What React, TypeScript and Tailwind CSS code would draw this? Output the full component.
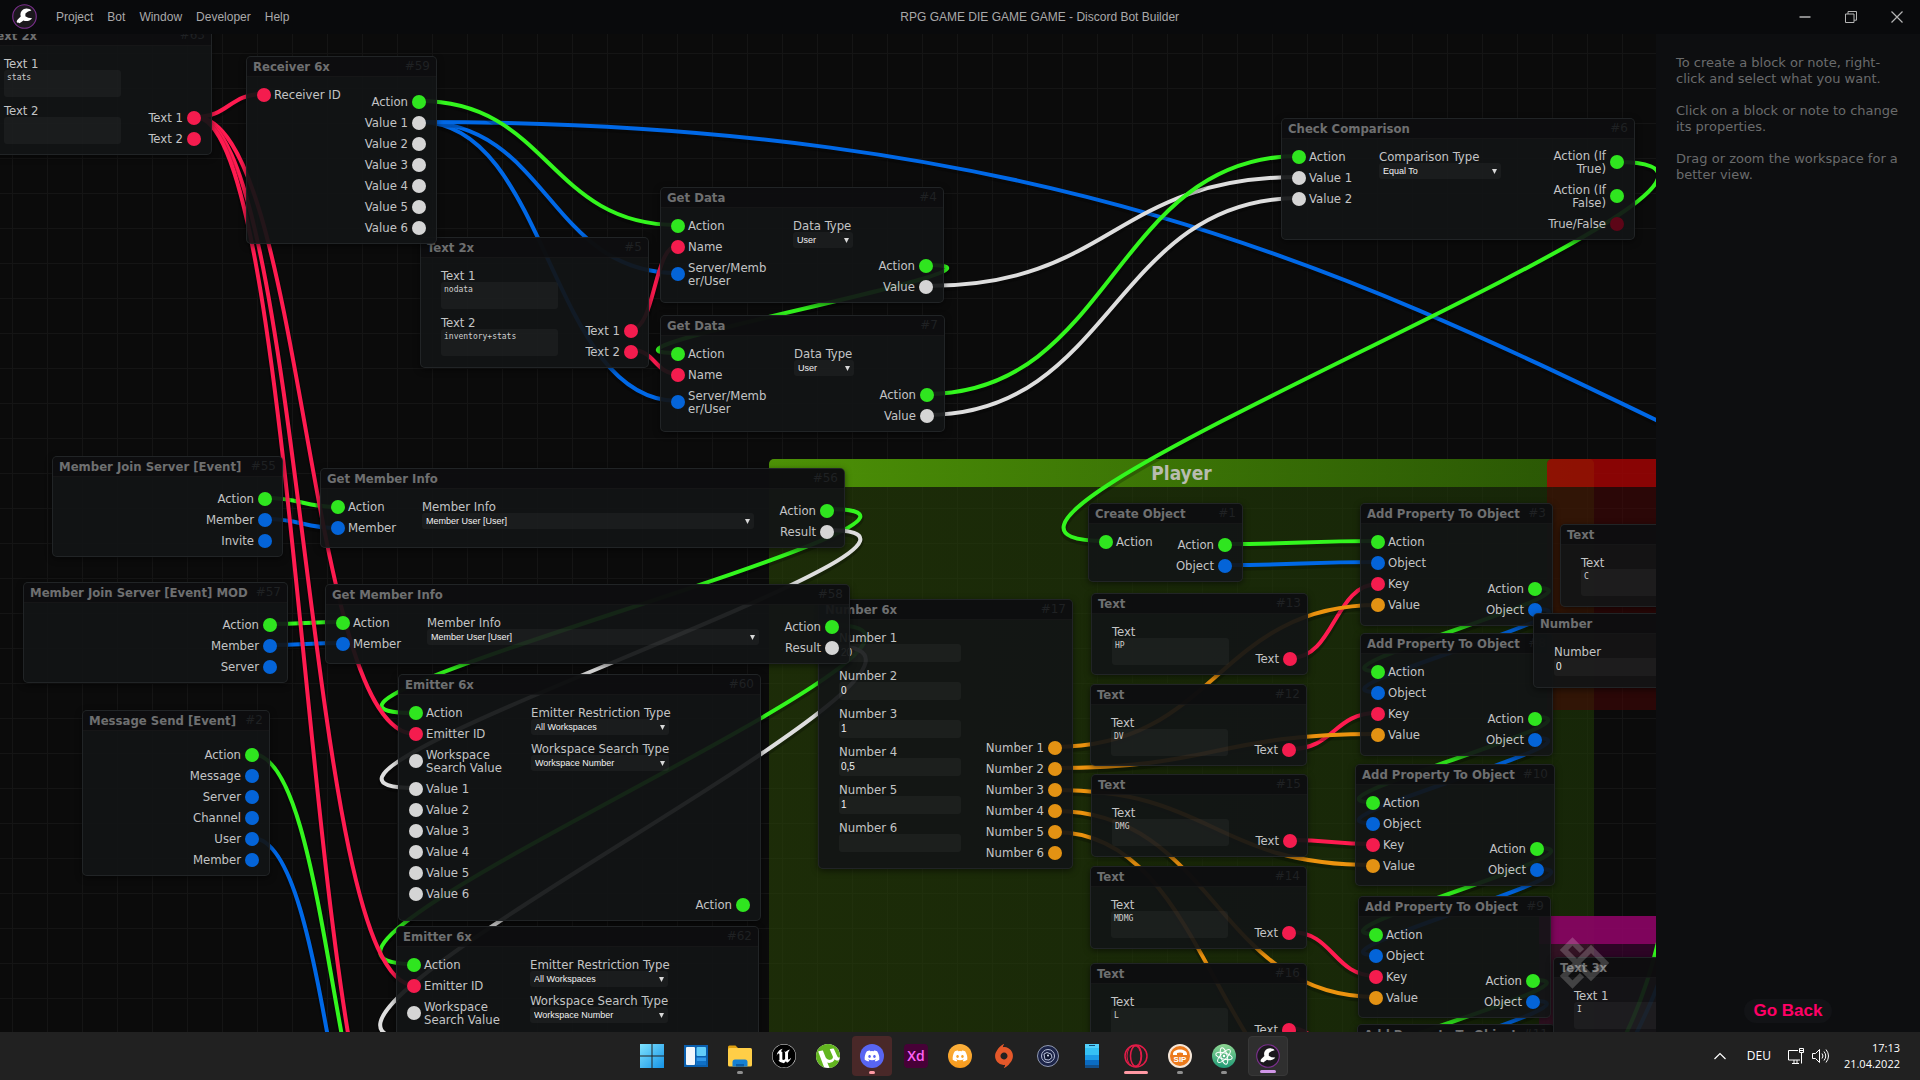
import React from "react";
import { FaDiscord } from "react-icons/fa";
import { SiUnrealengine, SiUtorrent, SiOrigin } from "react-icons/si";

type Tone = "green" | "white" | "blue" | "red" | "orange" | "maroon";
type Port = [Tone, string];
type Field = { kind: "select" | "text" | "number"; label: string; value: string; w: number };
type NodeData = {
  id: string;
  title: string;
  x: number;
  y: number;
  w: number;
  h: number;
  inputs?: Port[];
  outputs?: Port[];
  fields?: Field[];
  fieldX?: number;
};

const TITLE_BAR = 34;

const portTone: Record<Tone, string> = {
  green: "bg-[#2fe51f]",
  white: "bg-[#d5d5d5]",
  blue: "bg-[#0464d8]",
  red: "bg-[#f41c4e]",
  orange: "bg-[#e39213]",
  maroon: "bg-[#5c0517]",
};

const cableTone: Record<Tone, string> = {
  green: "#33f61e",
  white: "#dedede",
  blue: "#0068e6",
  red: "#ff1b50",
  orange: "#ec930f",
  maroon: "#5c0517",
};

const values = (n: number): Port[] =>
  Array.from({ length: n }, (_, i): Port => ["white", `Value ${i + 1}`]);

const propertyIn: Port[] = [["green", "Action"], ["blue", "Object"], ["red", "Key"], ["orange", "Value"]];
const propertyOut: Port[] = [["green", "Action"], ["blue", "Object"]];
const emitterIn: Port[] = [["green", "Action"], ["red", "Emitter ID"], ["white", "Workspace\nSearch Value"], ...values(6)];
const emitterFields: Field[] = [
  { kind: "select", label: "Emitter Restriction Type", value: "All Workspaces", w: 138 },
  { kind: "select", label: "Workspace Search Type", value: "Workspace Number", w: 138 },
];
const dataIn: Port[] = [["green", "Action"], ["red", "Name"], ["blue", "Server/Memb\ner/User"]];
const dataOut: Port[] = [["green", "Action"], ["white", "Value"]];
const memberFields: Field[] = [{ kind: "select", label: "Member Info", value: "Member User [User]", w: 332 }];
const memberOut: Port[] = [["green", "Action"], ["white", "Result"]];
const textOut: Port[] = [["red", "Text"]];
const text = (label: string, value: string): Field => ({ kind: "text", label, value, w: 117 });
const num = (label: string, value: string): Field => ({ kind: "number", label, value, w: 122 });

const nodes: NodeData[] = [
  { id: "63", title: "Text 2x", x: -17, y: 25, w: 229, h: 130, fieldX: 20, fields: [text("Text 1", "stats"), text("Text 2", "")], outputs: [["red", "Text 1"], ["red", "Text 2"]] },
  { id: "5", title: "Text 2x", x: 420, y: 237, w: 229, h: 131, fieldX: 20, fields: [text("Text 1", "nodata"), text("Text 2", "inventory+stats")], outputs: [["red", "Text 1"], ["red", "Text 2"]] },
  { id: "59", title: "Receiver 6x", x: 246, y: 56, w: 191, h: 188, inputs: [["red", "Receiver ID"]], outputs: [["green", "Action"], ...values(6)] },
  { id: "4", title: "Get Data", x: 660, y: 187, w: 284, h: 116, fieldX: 132, inputs: dataIn, outputs: dataOut, fields: [{ kind: "select", label: "Data Type", value: "User", w: 60 }] },
  { id: "7", title: "Get Data", x: 660, y: 315, w: 285, h: 117, fieldX: 133, inputs: dataIn, outputs: dataOut, fields: [{ kind: "select", label: "Data Type", value: "User", w: 60 }] },
  { id: "6", title: "Check Comparison", x: 1281, y: 118, w: 354, h: 122, fieldX: 97, inputs: [["green", "Action"], ["white", "Value 1"], ["white", "Value 2"]], outputs: [["green", "Action (If\nTrue)"], ["green", "Action (If\nFalse)"], ["maroon", "True/False"]], fields: [{ kind: "select", label: "Comparison Type", value: "Equal To", w: 122 }] },
  { id: "17", title: "Number 6x", x: 818, y: 599, w: 255, h: 270, fieldX: 20, fields: [num("Number 1", "20"), num("Number 2", "0"), num("Number 3", "1"), num("Number 4", "0,5"), num("Number 5", "1"), num("Number 6", "")], outputs: [1, 2, 3, 4, 5, 6].map((n): Port => ["orange", `Number ${n}`]) },
  { id: "55", title: "Member Join Server [Event]", x: 52, y: 456, w: 231, h: 101, outputs: [["green", "Action"], ["blue", "Member"], ["blue", "Invite"]] },
  { id: "57", title: "Member Join Server [Event] MOD", x: 23, y: 582, w: 265, h: 101, outputs: [["green", "Action"], ["blue", "Member"], ["blue", "Server"]] },
  { id: "2", title: "Message Send [Event]", x: 82, y: 710, w: 188, h: 166, outputs: [["green", "Action"], ["blue", "Message"], ["blue", "Server"], ["blue", "Channel"], ["blue", "User"], ["blue", "Member"]] },
  { id: "56", title: "Get Member Info", x: 320, y: 468, w: 525, h: 80, fieldX: 101, inputs: [["green", "Action"], ["blue", "Member"]], outputs: memberOut, fields: memberFields },
  { id: "58", title: "Get Member Info", x: 325, y: 584, w: 525, h: 80, fieldX: 101, inputs: [["green", "Action"], ["blue", "Member"]], outputs: memberOut, fields: memberFields },
  { id: "60", title: "Emitter 6x", x: 398, y: 674, w: 363, h: 247, fieldX: 132, inputs: emitterIn, outputs: [["green", "Action"]], fields: emitterFields },
  { id: "62", title: "Emitter 6x", x: 396, y: 926, w: 363, h: 247, fieldX: 133, inputs: emitterIn, outputs: [["green", "Action"]], fields: emitterFields },
  { id: "1", title: "Create Object", x: 1088, y: 503, w: 155, h: 79, inputs: [["green", "Action"]], outputs: propertyOut },
  { id: "13", title: "Text", x: 1091, y: 593, w: 217, h: 82, fieldX: 20, fields: [text("Text", "HP")], outputs: textOut },
  { id: "12", title: "Text", x: 1090, y: 684, w: 217, h: 82, fieldX: 20, fields: [text("Text", "DV")], outputs: textOut },
  { id: "15", title: "Text", x: 1091, y: 774, w: 217, h: 83, fieldX: 20, fields: [text("Text", "DMG")], outputs: textOut },
  { id: "14", title: "Text", x: 1090, y: 866, w: 217, h: 83, fieldX: 20, fields: [text("Text", "MDMG")], outputs: textOut },
  { id: "16", title: "Text", x: 1090, y: 963, w: 217, h: 83, fieldX: 20, fields: [text("Text", "L")], outputs: textOut },
  { id: "3", title: "Add Property To Object", x: 1360, y: 503, w: 193, h: 123, inputs: propertyIn, outputs: propertyOut },
  { id: "8", title: "Add Property To Object", x: 1360, y: 633, w: 193, h: 123, inputs: propertyIn, outputs: propertyOut },
  { id: "10", title: "Add Property To Object", x: 1355, y: 764, w: 200, h: 122, inputs: propertyIn, outputs: propertyOut },
  { id: "9", title: "Add Property To Object", x: 1358, y: 896, w: 193, h: 122, inputs: propertyIn, outputs: propertyOut },
  { id: "11", title: "Add Property To Object", x: 1357, y: 1024, w: 198, h: 122, inputs: propertyIn, outputs: propertyOut },
  { id: "18", title: "Text", x: 1560, y: 524, w: 217, h: 83, fieldX: 20, fields: [text("Text", "C")], outputs: textOut },
  { id: "19", title: "Number", x: 1533, y: 613, w: 217, h: 75, fieldX: 20, fields: [num("Number", "0")] },
  { id: "20", title: "Text 3x", x: 1553, y: 957, w: 229, h: 177, fieldX: 20, fields: [text("Text 1", "I"), text("Text 2", "")] },
];

const cables: [Tone, number, number, number, number][] = [
  ["blue", 420, 122, 677, 273],
  ["blue", 420, 122, 678, 401],
  ["blue", 420, 122, 2892, 718],
  ["green", 420, 101, 677, 225],
  ["green", 927, 265, 678, 353],
  ["white", 927, 286, 1299, 177],
  ["white", 927, 415, 1299, 198],
  ["green", 927, 394, 1299, 156],
  ["green", 1617, 162, 1105, 541],
  ["red", 632, 329, 677, 246],
  ["red", 632, 350, 678, 374],
  ["green", 266, 498, 338, 507],
  ["blue", 266, 519, 338, 528],
  ["green", 270, 624, 342, 622],
  ["blue", 270, 645, 342, 643],
  ["green", 827, 509, 415, 713],
  ["white", 827, 530, 415, 788],
  ["green", 832, 625, 414, 964],
  ["white", 832, 646, 414, 1039],
  ["green", 252, 754, 414, 1217],
  ["blue", 252, 838, 414, 1292],
  ["red", 195, 117, 263, 94],
  ["red", 195, 117, 415, 734],
  ["red", 195, 117, 414, 985],
  ["red", 195, 117, 414, 1210],
  ["green", 1226, 544, 1378, 541],
  ["blue", 1226, 565, 1378, 562],
  ["green", 1536, 588, 1377, 671],
  ["blue", 1536, 609, 1377, 692],
  ["green", 1535, 717, 1372, 802],
  ["blue", 1535, 738, 1372, 823],
  ["green", 1538, 848, 1376, 934],
  ["blue", 1538, 869, 1376, 955],
  ["green", 1534, 980, 1375, 1062],
  ["blue", 1534, 1001, 1375, 1083],
  ["red", 1291, 658, 1378, 584],
  ["red", 1291, 749, 1377, 713],
  ["red", 1291, 840, 1372, 844],
  ["red", 1291, 932, 1376, 976],
  ["red", 1290, 1028, 1375, 1104],
  ["orange", 1055, 747, 1378, 605],
  ["orange", 1055, 768, 1377, 734],
  ["orange", 1055, 790, 1372, 865],
  ["orange", 1055, 811, 1376, 997],
  ["orange", 1055, 832, 1375, 1126],
];

function cablePath(x1: number, y1: number, x2: number, y2: number) {
  const bend = Math.abs(x2 - x1) / 2;
  return `M${x1} ${y1}C${x1 + bend} ${y1} ${x2 - bend} ${y2} ${x2} ${y2}`;
}

function Cables() {
  return (
    <svg className="absolute inset-0 h-full w-full" fill="none" aria-hidden="true">
      <g transform={`translate(0 ${-TITLE_BAR})`} strokeWidth="4">
        {cables.map(([tone, x1, y1, x2, y2], i) => (
          <g key={i}>
            <path d={cablePath(x1, y1 + 2, x2, y2 + 2)} stroke="#000" strokeOpacity=".22" strokeWidth="7" />
            <path d={cablePath(x1, y1, x2, y2)} stroke={cableTone[tone]} />
          </g>
        ))}
        <path d="M1662 925C1652 970 1642 1000 1626 1034" stroke="#33f61e" />
        <path d="M1668 950C1660 985 1650 1005 1636 1034" stroke="#0068e6" />
      </g>
    </svg>
  );
}

function PortRow({ port, side }: { port: Port; side: "in" | "out" }) {
  const [tone, label] = port;
  return (
    <li className={side === "in" ? "flex items-center gap-[3px] py-1" : "flex flex-row-reverse items-center gap-1 py-1"}>
      <span className={`-my-1 size-3.5 shrink-0 rounded-full ${portTone[tone]}`} />
      <span className={side === "in" ? "whitespace-pre" : "whitespace-pre text-right"}>{label}</span>
    </li>
  );
}

function FieldBox({ field }: { field: Field }) {
  return (
    <label className="block" style={{ width: field.w }}>
      <span className="block whitespace-nowrap">{field.label}</span>
      {field.kind === "select" && (
        <span className="relative block">
          <select className="block h-4 w-full appearance-none rounded-[3px] bg-white/4 pl-1 font-['Liberation_Sans',sans-serif] text-[9px] leading-4 text-[#f2f2f2]">
            <option>{field.value}</option>
          </select>
          <svg viewBox="0 0 6 6" className="pointer-events-none absolute top-1.5 right-1 size-[5px] fill-[#d8d8d8]" aria-hidden="true">
            <path d="M0 0h6L3 6z" />
          </svg>
        </span>
      )}
      {field.kind === "text" && (
        <textarea
          defaultValue={field.value}
          className="block h-[27px] w-full resize-none overflow-hidden rounded-[3px] bg-white/4 px-[3px] py-[3px] font-['DejaVu_Sans_Mono',monospace] text-[8px] leading-[10px] text-[#cfcfcf]"
        />
      )}
      {field.kind === "number" && (
        <input
          defaultValue={field.value}
          className="block h-[18px] w-full rounded-[3px] bg-white/4 px-0.5 font-['Liberation_Sans',sans-serif] text-[10px] leading-[18px] text-[#f2f2f2]"
        />
      )}
    </label>
  );
}

function Block({ node }: { node: NodeData }) {
  const fields = node.fields ?? [];
  return (
    <article
      className="absolute flex flex-col rounded-[5px] border border-[#26292b]/80 bg-[#121416]/93 text-[13px] leading-[13px] text-[#c3c4c5] shadow-[0_2px_6px_rgba(0,0,0,0.5)]"
      style={{ left: node.x, top: node.y - TITLE_BAR, width: node.w, height: node.h }}
    >
      <header className="flex h-5 shrink-0 items-center justify-between rounded-t-[4px] border-b border-white/4 bg-[#0c0d0e]/80 px-1.5">
        <h3 className="font-bold whitespace-nowrap text-[#6e6f70]">{node.title}</h3>
        <span className="font-['DejaVu_Sans',sans-serif] text-[12px] text-[#1f2123]">#{node.id}</span>
      </header>
      <div className="flex min-h-0 flex-1 pt-[7px] pb-[5px]">
        <ul className="shrink-0 pl-2.5" style={node.fieldX ? { width: node.fieldX } : undefined}>
          {(node.inputs ?? []).map((p) => (
            <PortRow key={p[1]} port={p} side="in" />
          ))}
        </ul>
        {fields.length > 0 && (
          <div className="flex w-0 flex-col gap-[7px] pt-1">
            {fields.map((f) => (
              <FieldBox key={f.label} field={f} />
            ))}
          </div>
        )}
        <ul className="ml-auto self-end pr-2.5">
          {(node.outputs ?? []).map((p) => (
            <PortRow key={p[1]} port={p} side="out" />
          ))}
        </ul>
      </div>
    </article>
  );
}

function Groups() {
  return (
    <>
      <section className="absolute top-[425px] left-[769px] h-[700px] w-[825px] overflow-hidden rounded-t-[5px] bg-linear-to-r from-[#294406]/58 to-[#1f3a06]/58">
        <h2 className="h-7 bg-linear-to-r from-[#539f06]/88 to-[#2c5c04]/88 text-center text-[19px] leading-7 font-bold text-[#b8bcb0]">Player</h2>
      </section>
      <section className="absolute top-[425px] left-[1547px] h-[251px] w-[400px] overflow-hidden rounded-t-[5px] bg-[#4b0303]/50">
        <div className="h-7 bg-[#bb0303]/65" />
      </section>
      <section className="absolute top-[882px] left-[1539px] h-[251px] w-[400px] bg-[#4f0040]/50">
        <div className="h-7 bg-[#94046a]/80" />
      </section>
    </>
  );
}

function BuilderLogo({ className }: { className: string }) {
  return (
    <svg viewBox="0 0 24 24" className={className} fill="none" aria-hidden="true">
      <circle cx="12" cy="12" r="11.3" fill="#1b181d" stroke="#7a2f8c" strokeWidth="1.1" />
      <path d="M18.6 6.2C17 4.4 13.6 3.7 11 5.1C8.3 6.6 7.6 9.5 8.4 12L5.5 14.8C4.3 16 4.3 17.2 5.2 18.1L5.9 17.7L7.2 18.4L8.6 17.6L11 15.8C13.5 16.8 17.2 16.5 19.3 13.6L15.5 13.2L12.8 11.7L12.9 9L15.4 7.3Z" fill="#fff" />
    </svg>
  );
}

function TitleBar() {
  return (
    <header className="flex h-[34px] shrink-0 items-center bg-[#090a0c] pb-[1px] font-['Liberation_Sans',sans-serif] text-[12px] text-[#a9a9aa]">
      <BuilderLogo className="ml-3 size-[25px]" />
      <nav className="ml-[19px] flex gap-3.5">
        {["Project", "Bot", "Window", "Developer", "Help"].map((m) => (
          <button key={m} type="button">{m}</button>
        ))}
      </nav>
      <h1 className="flex-1 pl-2 text-center">RPG GAME DIE GAME GAME - Discord Bot Builder</h1>
      <div className="flex">
        <button type="button" aria-label="Minimize" className="grid h-8 w-[46px] place-items-center">
          <svg viewBox="0 0 12 12" className="size-3" stroke="#b5b5b5" fill="none"><path d="M.5 6h11" strokeWidth="1.5" /></svg>
        </button>
        <button type="button" aria-label="Restore" className="grid h-8 w-[46px] place-items-center">
          <svg viewBox="0 0 12 12" className="size-3" stroke="#b5b5b5" fill="none"><path d="M.5 3h8.5v8.5H.5zM3 3V.5h8.5V9.2H9" /></svg>
        </button>
        <button type="button" aria-label="Close" className="grid h-8 w-[46px] place-items-center">
          <svg viewBox="0 0 12 12" className="size-3" stroke="#b5b5b5" fill="none"><path d="M.5.5l11 11M11.5.5l-11 11" strokeWidth="1.2" /></svg>
        </button>
      </div>
    </header>
  );
}

function SidePanel() {
  return (
    <aside className="flex w-[264px] shrink-0 flex-col justify-between bg-[#0d0e10] pt-[21px] pb-[9px]">
      <div className="flex flex-col gap-4 pr-3 pl-5 font-['DejaVu_Sans',sans-serif] text-[13px] leading-4 text-[#6a6b6c]">
        <p>To create a block or note, right-click and select what you want.</p>
        <p>Click on a block or note to change its properties.</p>
        <p>Drag or zoom the workspace for a better view.</p>
      </div>
      <button type="button" className="h-6 self-center rounded-full bg-[#121316] px-2.5 font-['Liberation_Sans',sans-serif] text-[17px] leading-6 font-bold text-[#ff0066]">
        Go Back
      </button>
    </aside>
  );
}

type TaskbarApp = { name: string; icon: React.ReactNode; cell?: string; mark?: string };

const apps: TaskbarApp[] = [
  {
    name: "Start",
    icon: (
      <svg viewBox="0 0 24 24" className="size-6">
        <defs><linearGradient id="win" x1="0" y1="0" x2="1" y2="1"><stop stopColor="#7fe3ff" /><stop offset="1" stopColor="#1593e6" /></linearGradient></defs>
        <path fill="url(#win)" d="M0 0h11.5v11.5H0zM12.5 0H24v11.5H12.5zM0 12.5h11.5V24H0zM12.5 12.5H24V24H12.5z" />
      </svg>
    ),
  },
  {
    name: "Widgets",
    icon: (
      <svg viewBox="0 0 24 24" className="size-6">
        <path fill="#0a5fae" d="M0 1h24v22H0z" />
        <rect x="2" y="3" width="9" height="18" rx="1" fill="#f1f6fb" />
        <rect x="12.5" y="3" width="9.5" height="9" rx="1" fill="#62cdf9" />
        <path fill="#2f97e8" d="M12.5 13.5h9.5v7.5h-9.5z" />
        <path fill="#0f70c6" d="M12.5 17h9.5v4h-9.5z" />
      </svg>
    ),
  },
  {
    name: "Explorer",
    mark: "w-1.5 bg-[#8f8f8f]",
    icon: (
      <svg viewBox="0 0 24 24" className="size-6">
        <path fill="#e0a010" d="M0 3q0-1.5 1.5-1.5h6L10 4v6H0z" />
        <rect y="4" width="24" height="18.5" rx="1.5" fill="#ffce47" />
        <path fill="#1680d2" d="M4.5 22.5V18q0-2.5 2.5-2.5h10q2.5 0 2.5 2.5v4.5z" />
        <path fill="#0c5ca5" d="M8 22.5V20h8v2.5z" />
      </svg>
    ),
  },
  {
    name: "Unreal Engine",
    icon: <span className="grid size-6 place-items-center rounded-full bg-black text-white"><SiUnrealengine className="size-6" /></span>,
  },
  {
    name: "uTorrent",
    icon: <span className="grid size-6 place-items-center rounded-full bg-white text-[#62b51f]"><SiUtorrent className="size-6" /></span>,
  },
  {
    name: "Discord",
    cell: "bg-[#492828]",
    mark: "w-1.5 bg-[#ff99a4]",
    icon: <span className="grid size-6 place-items-center rounded-full bg-[#5865f2] text-white"><FaDiscord className="size-4" /></span>,
  },
  {
    name: "Adobe XD",
    icon: <span className="grid size-6 place-items-center rounded-[4px] bg-[#470137] font-['Open_Sans',sans-serif] text-[14px] leading-none font-semibold text-[#ff61f6]">Xd</span>,
  },
  {
    name: "Bot client",
    icon: <span className="grid size-6 place-items-center rounded-full bg-linear-to-b from-[#fbb03b] to-[#f79a1b] text-white"><FaDiscord className="size-4" /></span>,
  },
  { name: "Origin", icon: <SiOrigin className="size-6 text-[#e4582a]" /> },
  {
    name: "Badge",
    icon: (
      <svg viewBox="0 0 24 24" className="size-6" fill="none">
        <circle cx="12" cy="12" r="10.5" fill="#1c2448" stroke="#8f98b0" />
        <circle cx="12" cy="12" r="6.5" stroke="#b9c1d8" />
        <path d="M8 10l3-1.5 4 1.5 1 3.5-3 2.5-4-.5z" fill="#0f1630" stroke="#b9c1d8" />
        <circle cx="12" cy="11.5" r="1" fill="#dfe5f5" />
      </svg>
    ),
  },
  {
    name: "Phone",
    icon: (
      <svg viewBox="0 0 24 24" className="size-6">
        <path fill="#52d0fb" d="M5 0h14v5H5z" />
        <path fill="#35c1f4" d="M5 4h14v8H5z" />
        <path fill="#1b9be6" d="M5 11h14v6H5z" />
        <path fill="#0b6cc2" d="M5 16h14v5H5z" />
        <path fill="#124f8a" d="M5 21h14v3H5z" />
        <path fill="#0d4a75" d="M9 1h6v1H9z" />
      </svg>
    ),
  },
  {
    name: "Opera",
    mark: "w-6 bg-[#ff99a4]",
    icon: (
      <svg viewBox="0 0 24 24" className="size-6" fill="none" stroke="#e21c48">
        <circle cx="12" cy="12" r="11" strokeWidth="1.5" />
        <ellipse cx="12" cy="12" rx="5.5" ry="10.5" strokeWidth="1.5" />
        <ellipse cx="10" cy="12" rx="7" ry="10.5" strokeWidth="1" />
      </svg>
    ),
  },
  {
    name: "SIP client",
    mark: "w-1.5 bg-[#8f8f8f]",
    icon: (
      <span className="flex size-6 flex-col items-center justify-center rounded-full border-2 border-[#f5e6d8] bg-[#ec7a1c] text-white">
        <svg viewBox="0 0 16 8" className="h-2 w-4"><path d="M1 6C1 0 15 0 15 6v1h-4V5Q8 4 5 5v2H1z" fill="#fff" /></svg>
        <span className="font-['Liberation_Sans',sans-serif] text-[8px] leading-[8px] font-bold">SIP</span>
      </span>
    ),
  },
  {
    name: "Atom",
    mark: "w-1.5 bg-[#8f8f8f]",
    icon: (
      <svg viewBox="0 0 24 24" className="size-6" fill="none">
        <defs><linearGradient id="atom" x1="0" y1="0" x2="0" y2="1"><stop stopColor="#8ed692" /><stop offset="1" stopColor="#1f9a76" /></linearGradient></defs>
        <circle cx="12" cy="12" r="12" fill="url(#atom)" />
        <g stroke="#fff" strokeWidth="1">
          <ellipse cx="12" cy="12" rx="8.5" ry="3.2" transform="rotate(15 12 12)" />
          <ellipse cx="12" cy="12" rx="8.5" ry="3.2" transform="rotate(75 12 12)" />
          <ellipse cx="12" cy="12" rx="8.5" ry="3.2" transform="rotate(135 12 12)" />
        </g>
        <circle cx="12" cy="12" r="1.2" fill="#fff" />
      </svg>
    ),
  },
  { name: "Discord Bot Builder", cell: "bg-[#2f2f2f] border border-[#383838]", mark: "w-4 bg-[#d196e8]", icon: <BuilderLogo className="size-6" /> },
];

function Taskbar() {
  return (
    <footer className="grid h-12 shrink-0 grid-cols-[1fr_auto_1fr] items-center bg-[#212121] text-white">
      <div />
      <nav className="flex gap-1">
        {apps.map((a) => (
          <button key={a.name} type="button" aria-label={a.name} className={`relative grid size-10 place-items-center rounded-[4px] ${a.cell ?? ""}`}>
            {a.icon}
            {a.mark && <span className={`absolute bottom-0.5 left-1/2 h-[3px] -translate-x-1/2 rounded-full ${a.mark}`} />}
          </button>
        ))}
      </nav>
      <div className="flex items-center justify-end pr-5 font-['Open_Sans',sans-serif] text-[11px]">
        <svg viewBox="0 0 12 8" className="h-2 w-3" fill="none" stroke="#fff" strokeWidth="1.2"><path d="M.5 7L6 1.5 11.5 7" /></svg>
        <span className="ml-[21px] text-[12px]">DEU</span>
        <svg viewBox="0 0 16 16" className="ml-[17px] size-4" fill="none" stroke="#fff"><path d="M10 2.5H.5V12H12M4 15.5h7M6 12v3.5M9 12v3.5M11.5.5h4v4h-4zM11.5 2.5h4M13.5 4.5v11" /></svg>
        <svg viewBox="0 0 18 16" className="ml-2 h-4 w-[18px]" fill="none" stroke="#fff"><path d="M.5 5.500h3l4-4v13l-4-4h-3zM10 5.500q2 2.500 0 5M12 3.500q3.500 4.500 0 9M14 1.500q5 6.500 0 13" /></svg>
        <div className="ml-[14px] text-right leading-4">
          <div>17:13</div>
          <div>21.04.2022</div>
        </div>
      </div>
    </footer>
  );
}

function Watermark() {
  return (
    <svg viewBox="0 0 52 52" className="pointer-events-none absolute top-[903px] left-[1559px] size-[52px]" fill="none" stroke="#fff" strokeOpacity=".2" strokeWidth="6" aria-hidden="true">
      <path d="M23 14L13.5 4.5 5 13 32 40 46 26 32 12 5 39 13.5 47.5 23 38" />
    </svg>
  );
}

export default function App() {
  return (
    <div className="flex h-screen flex-col overflow-hidden bg-[#0b0b0b] font-['DejaVu_Sans_Condensed','DejaVu_Sans',sans-serif]">
      <TitleBar />
      <div className="flex min-h-0 flex-1">
        <main className="relative min-w-0 flex-1 overflow-hidden bg-[#0b0b0b] bg-[linear-gradient(to_right,#151515_1px,transparent_1px),linear-gradient(to_bottom,#151515_1px,transparent_1px)] bg-size-[35px_35px] bg-position-[12px_19px]">
          <Groups />
          <Cables />
          {nodes.map((n) => (
            <Block key={n.id} node={n} />
          ))}
          <Watermark />
        </main>
        <SidePanel />
      </div>
      <Taskbar />
    </div>
  );
}
